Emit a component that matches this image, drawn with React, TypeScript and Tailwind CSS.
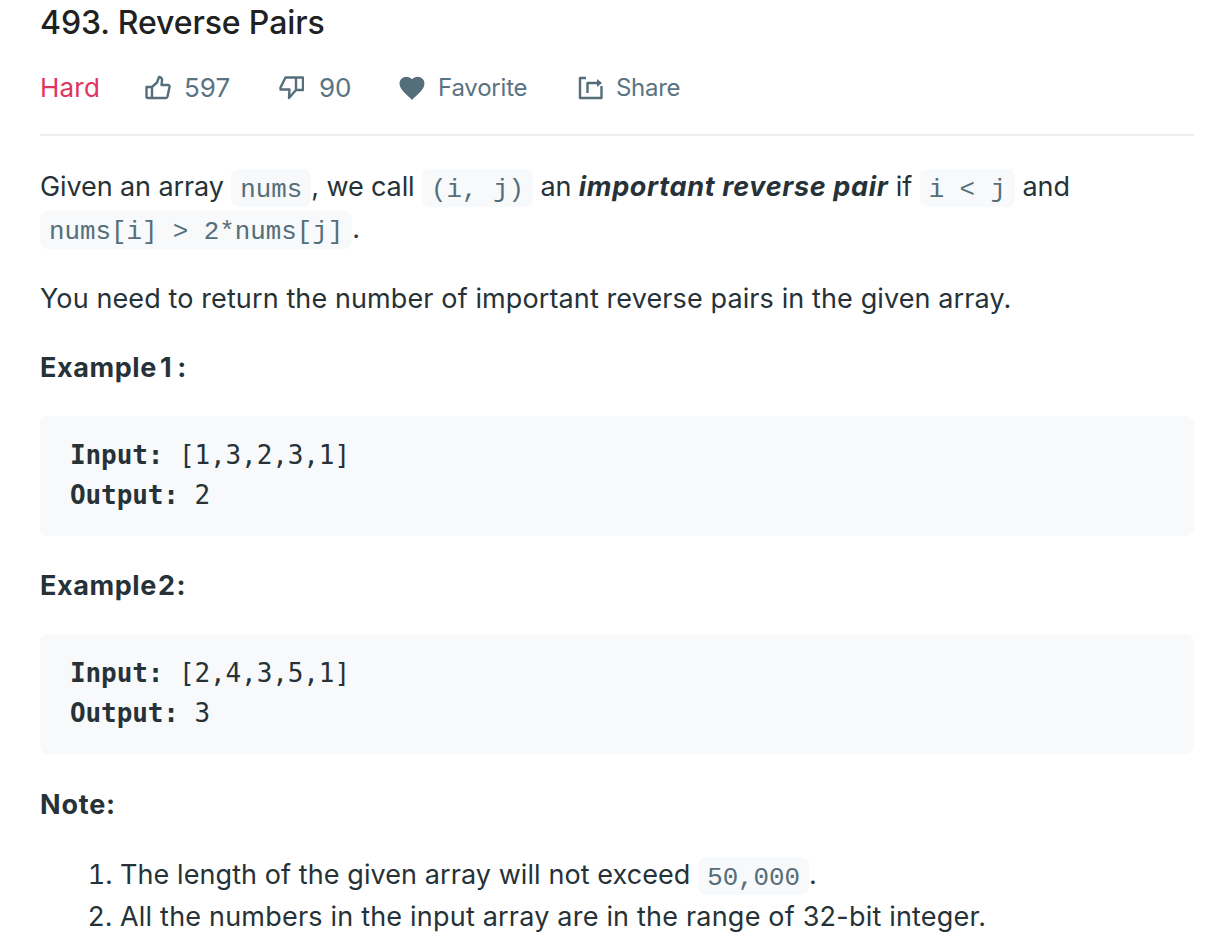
const Code = ({ children }: { children: string }) => (
  <code className="font-['Liberation_Mono',monospace] text-[25.8px] leading-[36px] tracking-normal text-[#546e7a] bg-[#f7f9fa] rounded-[8px] px-[9px] pt-[6.5px] pb-[2.5px] whitespace-pre">{children}</code>
);

const Pre = ({ a, b }: { a: string; b: string }) => (
  <pre className="font-['DejaVu_Sans_Mono',monospace] tracking-[-0.1px] text-[26px] leading-[40px] text-[#263238] bg-[#f7f9fa] rounded-[8px] pl-[30px] pt-[19px] pb-[21px] h-[120px]">
    <div><b>Input:</b> {a}</div>
    <div><b>Output:</b> {b}</div>
  </pre>
);

export default function App() {
  return (
    <div className="font-['Inter',sans-serif] bg-white h-[942px] overflow-hidden pl-[40px] pr-[30px] text-[#263238] text-[27px] leading-[44px] tracking-[0.11px]">
      <h1 className="text-[32px] leading-[46px] tracking-[-0.12px] font-medium text-[#212121]">493. Reverse Pairs</h1>
      <div className="flex items-center h-[90px] text-[24px] tracking-[-0.2px] text-[#5a7380] border-b-2 border-[#eeeeee] mb-[30px] pb-[4px]">
        <span className="text-[#e0335f] text-[26px] w-[105px] tracking-[0.2px]">Hard</span>
        <svg className="w-[26px] h-[26px] mr-[13px]" viewBox="0 0 26 26" fill="none" stroke="#546e7a" strokeWidth="2.400" strokeLinejoin="round">
          <path d="M1.500 12H7V23H3A1.500 1.500 0 0 1 1.500 21.500zM7 12l5-4.500L14 2c2 .3 3.500 1.500 3 3.500L16.500 10H23a1.500 1.500 0 0 1 1.500 2L22.500 21.500A2 2 0 0 1 20.800 23H7" />
        </svg>
        <span className="text-[26px] w-[48px] tracking-[0px]">597</span>
        <svg className="w-[26px] h-[26px] ml-[46px] mr-[15px]" viewBox="0 0 26 26" fill="none" stroke="#546e7a" strokeWidth="2.400" strokeLinejoin="round">
          <path d="M18 2.500H25V15H18zM18 2.500H7.500L2.500 12.500V14.500H11.500L11 23L18 15" />
        </svg>
        <span className="text-[26px] w-[32px] tracking-[0px]">90</span>
        <svg className="w-[26px] h-[26px] ml-[48px] mr-[13px]" viewBox="0 0 24 24" fill="#546e7a">
          <path d="M12 23 10.300 21.300C4.500 16 .5 12.400.5 7.800.5 4.200 3.300 1.500 6.800 1.500c2 0 3.900.9 5.200 2.400C13.300 2.400 15.200 1.500 17.200 1.500c3.500 0 6.300 2.700 6.300 6.300 0 4.600-4 8.200-9.800 13.500z" />
        </svg>
        <span className="w-[90px]">Favorite</span>
        <svg className="w-[26px] h-[26px] ml-[49px] mr-[13px]" viewBox="0 0 26 26" fill="none" stroke="#546e7a" strokeWidth="2.400" strokeLinejoin="round">
          <path d="M9 3H3V23H24.500V11" />
          <path d="M10.500 18V8H21" />
          <path d="M20 4L25 8L20 12z" fill="#546e7a" stroke="none" />
        </svg>
        <span className="tracking-[-0.3px]">Share</span>
      </div>

      <p className="mb-[27px] leading-[42px] tracking-[-0.1px]">
        Given an array <Code>nums</Code>, we call <Code>{"(i, j)"}</Code> an <b className="tracking-[0.65px]"><i>important reverse pair</i></b> if <Code>{"i < j"}</Code> and <Code>{"nums[i] > 2*nums[j]"}</Code>.
      </p>
      <p className="mb-[25px]">You need to return the number of important reverse pairs in the given array.</p>
      <p className="font-bold mb-[26px] tracking-[0.6px]">Example<span className="ml-[3px]">1</span><span className="ml-[5px]">:</span></p>
      <Pre a="[1,3,2,3,1]" b="2" />
      <p className="font-bold mt-[28px] mb-[26px] tracking-[0.6px]">Example<span className="ml-[1px]">2</span><span className="ml-[1px]">:</span></p>
      <Pre a="[2,4,3,5,1]" b="3" />
      <p className="font-bold mt-[29px] mb-[27px] tracking-[0.8px]">Note:</p>
      <ol className="list-decimal pl-[80px]">
        <li className="leading-[42px] tracking-[0.08px]">The length of the given array will not exceed <Code>50,000</Code>.</li>
        <li className="leading-[42px] tracking-[0.2px]">All the numbers in the input array are in the range of 32-bit integer.</li>
      </ol>
    </div>
  );
}
